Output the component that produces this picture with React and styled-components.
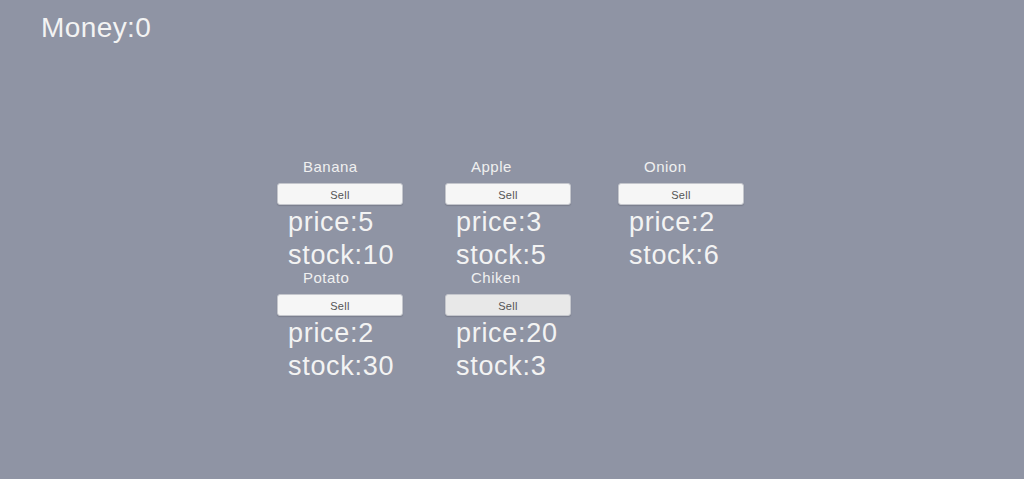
import React from "react";
import styled, { createGlobalStyle } from "styled-components";

const items = [
  { name: "Banana", price: 5, stock: 10 },
  { name: "Apple", price: 3, stock: 5 },
  { name: "Onion", price: 2, stock: 6 },
  { name: "Potato", price: 2, stock: 30 },
  { name: "Chiken", price: 20, stock: 3, hover: true },
];

export default function App() {
  return (
    <>
      <GlobalStyle />
      <Screen>
        <Money>Money:0</Money>
        <Shelf>
          {items.map((item) => (
            <Card key={item.name}>
              <Name>{item.name}</Name>
              <SellButton hover={item.hover}>Sell</SellButton>
              <Stats>
                <Stat>price:{item.price}</Stat>
                <Stat>stock:{item.stock}</Stat>
              </Stats>
            </Card>
          ))}
        </Shelf>
      </Screen>
    </>
  );
}

const GlobalStyle = createGlobalStyle`
  html, body {
    margin: 0;
    background: #8f94a4;
  }
  body {
    font-family: "Liberation Sans", Arial, sans-serif;
  }
`;

const Screen = styled.div`
  width: 1024px;
  height: 479px;
  background: #8f94a4;
  color: #f3f3f3;
  overflow: hidden;
`;

const Money = styled.div`
  padding: 12px 0 0 41px;
  font-size: 28px;
  line-height: 32px;
  letter-spacing: 0.4px;
`;

const Shelf = styled.div`
  display: grid;
  grid-template-columns: 168px 173px 126px;
  grid-auto-rows: 111px;
  margin: 115px 0 0 277px;
`;

const Card = styled.div`
  display: flex;
  flex-direction: column;
  width: 126px;

  & > * {
    flex-shrink: 0;
  }
`;

const Name = styled.div`
  padding-left: 26px;
  font-size: 15px;
  line-height: 16px;
  letter-spacing: 0.5px;
  color: #f0f0f0;
`;

const SellButton = styled.button`
  box-sizing: border-box;
  margin-top: 8px;
  width: 126px;
  height: 22px;
  padding: 1px 0 0;
  border: 1px solid #c4c6cc;
  border-radius: 3px;
  background: ${({ hover }) => (hover ? "#e8e8e8" : "#f6f6f6")};
  color: #555555;
  font-family: "Liberation Sans", Arial, sans-serif;
  font-size: 11px;
  letter-spacing: 0.3px;
  box-shadow: 0 1px 1px rgba(60, 60, 70, 0.25);
`;

const Stats = styled.div`
  margin-top: 1px;
  padding-left: 11px;
`;

const Stat = styled.div`
  font-size: 27px;
  line-height: 33px;
  letter-spacing: 0.7px;
  white-space: nowrap;
`;
